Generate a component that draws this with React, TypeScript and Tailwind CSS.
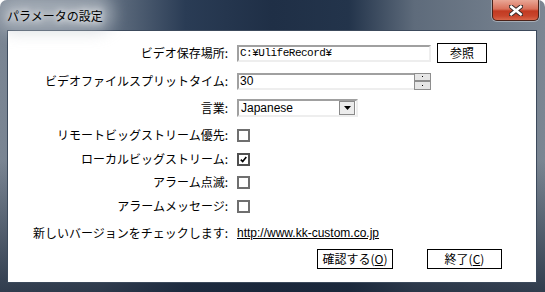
import React from "react";

const font = "font-['Noto_Sans_CJK_JP','Noto_Sans',sans-serif]";

function Label({ children }: { children: React.ReactNode }) {
  return (
    <div className="w-[221px] shrink-0 text-right pr-[1px] text-[12px] leading-none text-black whitespace-nowrap">
      {children}
    </div>
  );
}

function Check({ checked = false }: { checked?: boolean }) {
  return (
    <div
      className={
        "w-[13px] h-[13px] bg-white border-2 flex items-center justify-center " +
        (checked ? "border-[#505050]" : "border-[#6f6f6f]")
      }
    >
      {checked && (
        <svg width="7" height="7" viewBox="0 0 7 7">
          <path d="M0.8 3.6 L2.7 5.6 L6.3 1" stroke="#000" strokeWidth="1.6" fill="none" />
        </svg>
      )}
    </div>
  );
}

export default function App() {
  return (
    <div className={"relative w-[545px] h-[292px] overflow-hidden rounded-t-[7px] bg-[linear-gradient(180deg,rgba(0,0,0,0)_0%,rgba(0,0,0,0)_55%,rgba(24,36,54,0.75)_100%),linear-gradient(90deg,#7a8593_0%,#6b7888_18%,#2a3c55_34%,#1f2f46_50%,#23344b_64%,#5e6b7b_76%,#7b8693_100%)] " + font}>
      {/* title bar */}
      <div className="h-[30px] flex items-center pl-[7px] pb-[2px]">
        <div className="relative">
          <div className="absolute -inset-x-[10px] -inset-y-[6px] rounded-full bg-[#c3c9d0] opacity-60 blur-[8px]" />
          <span className="relative text-[12px] text-black [text-shadow:0_0_6px_#ffffff,0_0_10px_#ffffff]">
            パラメータの設定
          </span>
        </div>
      </div>
      {/* close button */}
      <div className="absolute top-0 left-[492px] w-[47px] h-[21px] rounded-b-[5px] border border-t-0 border-[#4a2219] bg-[linear-gradient(180deg,#e9a796_0%,#d9705a_45%,#c23a22_55%,#c8452c_80%,#d9664a_100%)] flex items-center justify-center shadow-[0_0_0_1px_rgba(255,255,255,0.35)]">
        <svg width="14" height="11" viewBox="0 0 14 11">
          <path d="M2 1.5 L12 9.5 M12 1.5 L2 9.5" stroke="#3a2a28" strokeWidth="4.5" strokeLinecap="square" />
          <path d="M2.3 1.8 L11.7 9.2 M11.7 1.8 L2.3 9.2" stroke="#ffffff" strokeWidth="2.6" strokeLinecap="square" />
        </svg>
      </div>
      {/* client area */}
      <div className="ml-[7px] mr-[8px] h-[253px] bg-white border border-[#3c4a5c] flex flex-col text-[12px] text-black">
        {/* row 1 */}
        <div className="mt-[12px] h-[20px] flex items-center">
          <Label>ビデオ保存場所:</Label>
          <div className="ml-[8px] w-[194px] h-[17px] border-2 border-t-[#a0a0a0] border-l-[#a0a0a0] border-b-[#eeeeee] border-r-[#eeeeee] bg-white flex items-start leading-[13px] pl-[1px] font-['Liberation_Mono',monospace] text-[11px] tracking-[-0.5px]">
            C:¥UlifeRecord¥
          </div>
          <div className="ml-[6px] w-[50px] h-[20px] border border-black bg-white flex items-center justify-center text-[12px]">
            参照
          </div>
        </div>
        {/* row 2 */}
        <div className="mt-[8px] h-[20px] flex items-center">
          <Label>ビデオファイルスプリットタイム:</Label>
          <div className="ml-[8px] w-[194px] h-[17px] border-2 border-t-[#a0a0a0] border-l-[#a0a0a0] border-b-[#eeeeee] border-r-[#eeeeee] bg-white flex items-start justify-between">
            <span className="pl-[1px] leading-[13px] text-[12px] font-['Liberation_Sans_Narrow','Liberation_Sans',sans-serif]">30</span>
            <div className="w-[17px] h-[17px] -mt-[2px] -mr-[2px] flex flex-col">
              <div className="h-[8.5px] bg-[#e6e6e6] border border-[#8e8e8e] flex items-center justify-center">
                <div className="w-[1px] h-[1px] bg-black" />
              </div>
              <div className="h-[8.5px] bg-[#e6e6e6] border border-[#8e8e8e] flex items-center justify-center">
                <div className="w-[1px] h-[1px] bg-black" />
              </div>
            </div>
          </div>
        </div>
        {/* row 3 */}
        <div className="mt-[7px] h-[20px] flex items-center">
          <Label>言業:</Label>
          <div className="ml-[8px] w-[121px] h-[18px] border-2 border-t-[#a0a0a0] border-l-[#a0a0a0] border-b-[#eeeeee] border-r-[#eeeeee] bg-white flex items-center justify-between">
            <span className="pl-[2px] text-[12px] font-['Liberation_Sans',sans-serif]">Japanese</span>
            <div className="w-[16px] h-[14px] mr-[1px] bg-[#ececec] border border-[#8a8a8a] flex items-center justify-center">
              <svg width="7" height="4" viewBox="0 0 7 4">
                <path d="M0 0 L7 0 L3.5 4 Z" fill="#000" />
              </svg>
            </div>
          </div>
        </div>
        {/* checkboxes */}
        <div className="mt-[7px] h-[20px] flex items-center">
          <Label>リモートビッグストリーム優先:</Label>
          <div className="ml-[8px]"><Check /></div>
        </div>
        <div className="mt-[4px] h-[20px] flex items-center">
          <Label>ローカルビッグストリーム:</Label>
          <div className="ml-[8px]"><Check checked /></div>
        </div>
        <div className="mt-[3px] h-[20px] flex items-center">
          <Label>アラーム点滅:</Label>
          <div className="ml-[8px]"><Check /></div>
        </div>
        <div className="mt-[4px] h-[20px] flex items-center">
          <Label>アラームメッセージ:</Label>
          <div className="ml-[8px]"><Check /></div>
        </div>
        {/* url */}
        <div className="mt-[7px] h-[20px] flex items-center">
          <Label>新しいバージョンをチェックします:</Label>
          <span className="ml-[8px] underline text-[12px] font-['Liberation_Sans',sans-serif]">
            http://www.kk-custom.co.jp
          </span>
        </div>
        {/* buttons */}
        <div className="mt-[6px] h-[20px] flex items-center pl-[309px] gap-[34px]">
          <div className="w-[76px] h-[20px] border border-black bg-white flex items-center justify-center text-[12px]">
            確認する(<span className="underline">O</span>)
          </div>
          <div className="w-[75px] h-[20px] border border-black bg-white flex items-center justify-center text-[12px]">
            終了(<span className="underline">C</span>)
          </div>
        </div>
      </div>
    </div>
  );
}
